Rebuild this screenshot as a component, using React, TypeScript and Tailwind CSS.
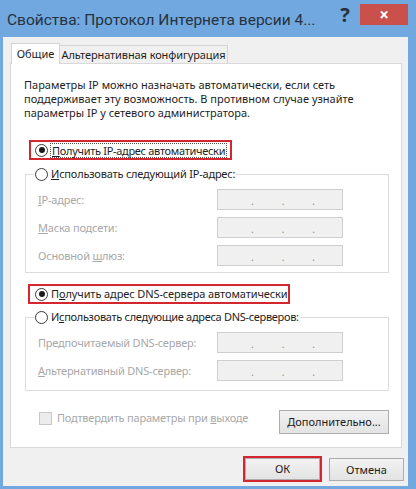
import React from "react";

const font = { fontFamily: '"Noto Sans", "Open Sans", sans-serif' };
const titleFont = { fontFamily: 'Roboto, "Noto Sans", sans-serif' };

const Radio = ({ checked = false }: { checked?: boolean }) => (
  <span className="flex h-[13px] w-[13px] shrink-0 items-center justify-center rounded-full border border-[#3a3a3a] bg-white">
    {checked && <span className="h-[6px] w-[6px] rounded-full bg-[#1a1a1a]" />}
  </span>
);

const IpBox = () => (
  <div className="flex h-[21px] w-[126px] shrink-0 items-center justify-center gap-[28px] border border-[#cfcfcf] bg-[#f0f0f0] pt-[3px] pl-[6px] text-[10px] leading-none text-[#8a8a8a]">
    <span>.</span>
    <span>.</span>
    <span>.</span>
  </div>
);

const Row = ({ children }: { children: React.ReactNode }) => (
  <div className="flex h-[21px] items-center justify-between pl-[12px] pr-[45px] text-[#a8a8a8]">
    <span className="whitespace-nowrap tracking-[-0.2px]">{children}</span>
    <IpBox />
  </div>
);

const Button = ({ children, className = "" }: { children: React.ReactNode; className?: string }) => (
  <div
    className={
      "flex items-center justify-center whitespace-nowrap border border-[#adadad] bg-gradient-to-b from-[#f2f2f2] to-[#e3e3e3] text-[#1a1a1a] " +
      className
    }
  >
    {children}
  </div>
);

export default function App() {
  return (
    <div
      className="flex h-[489px] w-[416px] flex-col overflow-hidden bg-[#70a8df] text-[11px] leading-[14px] text-[#1e1e1e]"
      style={font}
    >
      {/* title bar */}
      <div className="flex h-[37px] shrink-0 items-start">
        <div className="mt-[9px] whitespace-nowrap pl-[7px] text-[15.5px] leading-[22px] text-[#26323f]" style={titleFont}>
          Свойства: Протокол Интернета версии 4...
        </div>
        <div className="mt-[4px] ml-auto mr-[6px] w-[18px] text-center text-[20px] font-bold leading-[22px] text-[#27313d]">?</div>
        <div className="mt-[4px] mr-[8px] flex h-[21px] w-[48px] items-center justify-center bg-[#c9504b] text-[17px] font-bold leading-none text-white">
          ×
        </div>
      </div>

      {/* body */}
      <div className="ml-[3px] mr-[8px] flex h-[449px] shrink-0 flex-col bg-[#f0f0f0]">
        {/* tabs */}
        <div className="mt-[6px] flex h-[20px] items-end pl-[8px]">
          <div className="relative z-10 -mb-[1px] flex h-[21px] w-[49px] items-center justify-center border border-b-0 border-[#d4d4d4] bg-white">
            Общие
          </div>
          <div className="flex h-[18px] w-[168px] items-center justify-center whitespace-nowrap border border-b-0 border-l-0 border-[#d4d4d4] bg-[#f0f0f0] tracking-[-0.1px]">
            Альтернативная конфигурация
          </div>
        </div>

        {/* panel */}
        <div className="ml-[7px] mr-[6px] flex h-[385px] flex-col border border-[#d9d9d9] bg-white">
          <p className="mt-[14px] ml-[13px] whitespace-nowrap">
            Параметры IP можно назначать автоматически, если сеть
            <br />
            поддерживает эту возможность. В противном случае узнайте
            <br />
            параметры IP у сетевого администратора.
          </p>

          <div className="mt-[20px] ml-[18px] flex h-[20px] w-[203px] items-center gap-[2px] border-2 border-[#d3262e] pl-[4px]">
            <Radio checked />
            <span className="border border-dotted border-[#555] px-[1px] leading-[13px] whitespace-nowrap tracking-[-0.3px]">
              <span className="underline">П</span>олучить IP-адрес автоматически
            </span>
          </div>

          <fieldset className="mt-[6px] ml-[14px] h-[107px] w-[364px] border border-[#dcdcdc] px-[8px] pb-[6px]">
            <legend className="flex h-[16px] items-center gap-[3px] px-[1px]">
              <Radio />
              <span className="whitespace-nowrap tracking-[-0.2px]">
                <span className="underline">И</span>спользовать следующий IP-адрес:
              </span>
            </legend>
            <div className="-mx-[8px] mt-[7px] flex flex-col gap-[7px]">
              <Row>
                <span className="underline">I</span>P-адрес:
              </Row>
              <Row>
                <span className="underline">М</span>аска подсети:
              </Row>
              <Row>
                Основной <span className="underline">ш</span>люз:
              </Row>
            </div>
          </fieldset>

          <div className="mt-[11px] ml-[17px] flex h-[20px] w-[262px] items-center gap-[3px] border-2 border-[#d3262e] pl-[5px]">
            <Radio checked />
            <span className="whitespace-nowrap tracking-[-0.1px]">
              П<span className="underline">о</span>лучить адрес DNS-сервера автоматически
            </span>
          </div>

          <fieldset className="mt-[5px] ml-[14px] h-[82px] w-[364px] border border-[#dcdcdc] px-[8px]">
            <legend className="flex h-[16px] items-center gap-[3px] px-[1px]">
              <Radio />
              <span className="whitespace-nowrap tracking-[-0.3px]">
                И<span className="underline">с</span>пользовать следующие адреса DNS-серверов:
              </span>
            </legend>
            <div className="-mx-[8px] mt-[7px] flex flex-col gap-[7px]">
              <Row>
                Пре<span className="underline">д</span>почитаемый DNS-сервер:
              </Row>
              <Row>
                <span className="underline">А</span>льтернативный DNS-сервер:
              </Row>
            </div>
          </fieldset>

          <div className="mt-[19px] ml-[28px] mr-[12px] flex items-start">
            <div className="mt-[1px] flex items-center gap-[5px] text-[#a8a8a8]">
              <span className="h-[13px] w-[13px] border border-[#c8c8c8] bg-[#ececec]" />
              <span className="tracking-[-0.2px]">
                Подтвердить параметры при <span className="underline">в</span>ыходе
              </span>
            </div>
            <Button className="ml-auto h-[24px] w-[110px]">
              <span>
                <span className="underline">Д</span>ополнительно...
              </span>
            </Button>
          </div>
        </div>

        {/* footer */}
        <div className="mt-[8px] mr-[4px] flex items-start justify-end gap-[7px]">
          <div className="flex h-[26px] w-[79px] items-center justify-center border-2 border-[#d3262e]">
            <Button className="h-[22px] w-[75px]">ОК</Button>
          </div>
          <Button className="mt-[2px] h-[23px] w-[75px]">Отмена</Button>
        </div>
      </div>
    </div>
  );
}
